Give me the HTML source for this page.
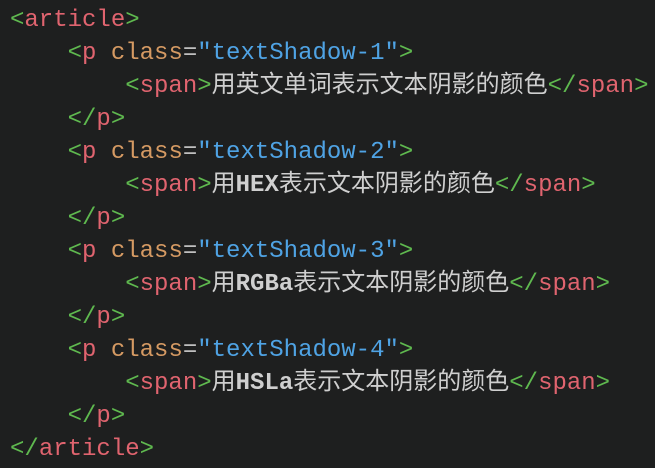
<!DOCTYPE html>
<html><head><meta charset="utf-8"><style>
html,body{margin:0;padding:0;background:#1e1f1f;width:655px;height:468px;overflow:hidden}
pre{margin:0;padding:4px 0 0 10px;font-family:"Liberation Mono","Noto Sans CJK SC",monospace;font-size:24px;line-height:33px;color:#cfcfcf}
.g{color:#5fb94f}.r{color:#e0646f}.o{color:#d59a63}.b{color:#4fa3e4}.w{color:#bfbfbf}
</style></head><body><pre><span class="g">&lt;</span><span class="r">article</span><span class="g">&gt;</span>
    <span class="g">&lt;</span><span class="r">p</span> <span class="o">class</span><span class="w">=</span><span class="b">"textShadow-1"</span><span class="g">&gt;</span>
        <span class="g">&lt;</span><span class="r">span</span><span class="g">&gt;</span>用英文单词表示文本阴影的颜色<span class="g">&lt;/</span><span class="r">span</span><span class="g">&gt;</span>
    <span class="g">&lt;/</span><span class="r">p</span><span class="g">&gt;</span>
    <span class="g">&lt;</span><span class="r">p</span> <span class="o">class</span><span class="w">=</span><span class="b">"textShadow-2"</span><span class="g">&gt;</span>
        <span class="g">&lt;</span><span class="r">span</span><span class="g">&gt;</span>用<b>HEX</b>表示文本阴影的颜色<span class="g">&lt;/</span><span class="r">span</span><span class="g">&gt;</span>
    <span class="g">&lt;/</span><span class="r">p</span><span class="g">&gt;</span>
    <span class="g">&lt;</span><span class="r">p</span> <span class="o">class</span><span class="w">=</span><span class="b">"textShadow-3"</span><span class="g">&gt;</span>
        <span class="g">&lt;</span><span class="r">span</span><span class="g">&gt;</span>用<b>RGBa</b>表示文本阴影的颜色<span class="g">&lt;/</span><span class="r">span</span><span class="g">&gt;</span>
    <span class="g">&lt;/</span><span class="r">p</span><span class="g">&gt;</span>
    <span class="g">&lt;</span><span class="r">p</span> <span class="o">class</span><span class="w">=</span><span class="b">"textShadow-4"</span><span class="g">&gt;</span>
        <span class="g">&lt;</span><span class="r">span</span><span class="g">&gt;</span>用<b>HSLa</b>表示文本阴影的颜色<span class="g">&lt;/</span><span class="r">span</span><span class="g">&gt;</span>
    <span class="g">&lt;/</span><span class="r">p</span><span class="g">&gt;</span>
<span class="g">&lt;/</span><span class="r">article</span><span class="g">&gt;</span></pre></body></html>
